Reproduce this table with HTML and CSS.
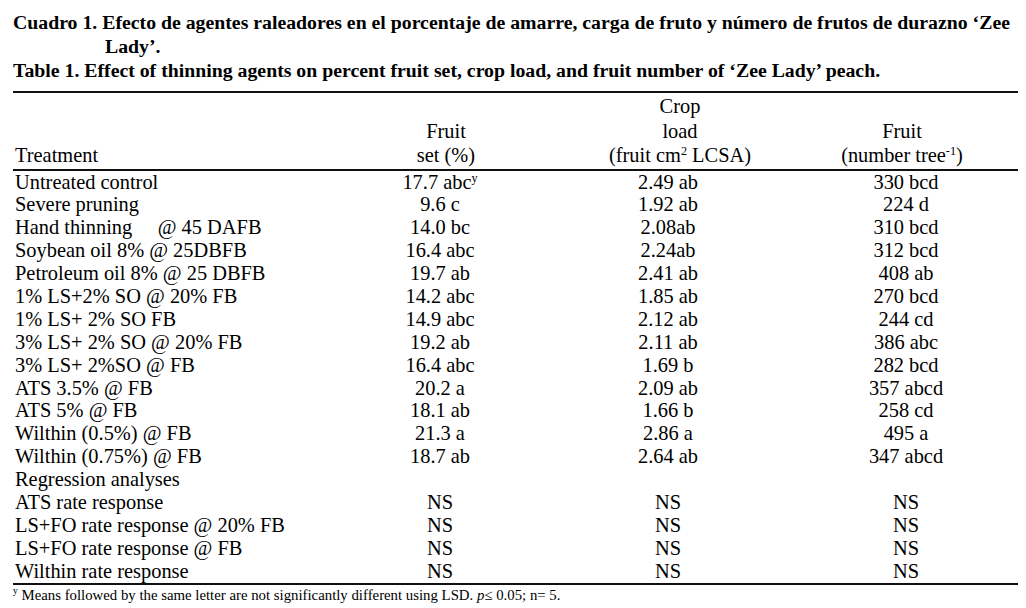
FILE: index.html
```html
<!DOCTYPE html>
<html lang="es">
<head>
<meta charset="utf-8">
<title>Cuadro 1</title>
<link rel="stylesheet" href="styles.css">
</head>
<body>
<div class="caption">
  <p class="cap-es">Cuadro 1. Efecto de agentes raleadores en el porcentaje de amarre, carga de fruto y número de frutos de durazno ‘Zee<br>Lady’.</p>
  <p class="cap-en">Table 1. Effect of thinning agents on percent fruit set, crop load, and fruit number of ‘Zee Lady’ peach.</p>
</div>
<div class="table">
  <div class="head">
    <div class="h h0">Treatment</div>
    <div class="h h1">Fruit<br>set (%)</div>
    <div class="h h2">Crop<br>load<br>(fruit cm<sup>2</sup> LCSA)</div>
    <div class="h h3">Fruit<br>(number tree<sup>-1</sup>)</div>
  </div>
  <div class="body">
    <div class="row"><span class="t">Untreated control</span><span class="c1">17.7 abc<sup>y</sup></span><span class="c2">2.49 ab</span><span class="c3">330 bcd</span></div>
    <div class="row"><span class="t">Severe pruning</span><span class="c1">9.6 c</span><span class="c2">1.92 ab</span><span class="c3">224 d</span></div>
    <div class="row"><span class="t">Hand thinning     @ 45 DAFB</span><span class="c1">14.0 bc</span><span class="c2">2.08ab</span><span class="c3">310 bcd</span></div>
    <div class="row"><span class="t">Soybean oil 8% @ 25DBFB</span><span class="c1">16.4 abc</span><span class="c2">2.24ab</span><span class="c3">312 bcd</span></div>
    <div class="row"><span class="t">Petroleum oil 8% @ 25 DBFB</span><span class="c1">19.7 ab</span><span class="c2">2.41 ab</span><span class="c3">408 ab</span></div>
    <div class="row"><span class="t">1% LS+2% SO @ 20% FB</span><span class="c1">14.2 abc</span><span class="c2">1.85 ab</span><span class="c3">270 bcd</span></div>
    <div class="row"><span class="t">1% LS+ 2% SO FB</span><span class="c1">14.9 abc</span><span class="c2">2.12 ab</span><span class="c3">244 cd</span></div>
    <div class="row"><span class="t">3% LS+ 2% SO @ 20% FB</span><span class="c1">19.2 ab</span><span class="c2">2.11 ab</span><span class="c3">386 abc</span></div>
    <div class="row"><span class="t">3% LS+ 2%SO @ FB</span><span class="c1">16.4 abc</span><span class="c2">1.69 b</span><span class="c3">282 bcd</span></div>
    <div class="row"><span class="t">ATS 3.5% @ FB</span><span class="c1">20.2 a</span><span class="c2">2.09 ab</span><span class="c3">357 abcd</span></div>
    <div class="row"><span class="t">ATS 5% @ FB</span><span class="c1">18.1 ab</span><span class="c2">1.66 b</span><span class="c3">258 cd</span></div>
    <div class="row"><span class="t">Wilthin (0.5%) @ FB</span><span class="c1">21.3 a</span><span class="c2">2.86 a</span><span class="c3">495 a</span></div>
    <div class="row"><span class="t">Wilthin (0.75%) @ FB</span><span class="c1">18.7 ab</span><span class="c2">2.64 ab</span><span class="c3">347 abcd</span></div>
    <div class="row"><span class="t">Regression analyses</span><span class="c1"></span><span class="c2"></span><span class="c3"></span></div>
    <div class="row"><span class="t">ATS rate response</span><span class="c1">NS</span><span class="c2">NS</span><span class="c3">NS</span></div>
    <div class="row"><span class="t">LS+FO rate response @ 20% FB</span><span class="c1">NS</span><span class="c2">NS</span><span class="c3">NS</span></div>
    <div class="row"><span class="t">LS+FO rate response @ FB</span><span class="c1">NS</span><span class="c2">NS</span><span class="c3">NS</span></div>
    <div class="row"><span class="t">Wilthin rate response</span><span class="c1">NS</span><span class="c2">NS</span><span class="c3">NS</span></div>
  </div>
</div>
<p class="note"><sup>y</sup> Means followed by the same letter are not significantly different using LSD. <i>p</i>≤ 0.05; n= 5.</p>
</body>
</html>
```
FILE: styles.css
```css
html, body {
  margin: 0;
  background: #fff;
}
body {
  padding: 10px 8px 0 13px;
  font-family: "Liberation Serif", "Times New Roman", serif;
  color: #000;
}
p { margin: 0; }
.caption {
  font-weight: bold;
  font-size: 19.8px;
  line-height: 24px;
  white-space: nowrap;
}
.cap-es {
  padding-left: 92px;
  text-indent: -92px;
}
.table {
  width: 1005px;
  margin-top: 9px;
  border-top: 2px solid #111;
  border-bottom: 2px solid #111;
  font-size: 20.4px;
}
.head {
  display: grid;
  grid-template-columns: 317px 220px 236px 232px;
  align-items: end;
  line-height: 24.5px;
  padding: 1px 0 1px;
  border-bottom: 2px solid #111;
}
.h0 { padding-left: 2px; }
.h1 { text-align: center; padding-left: 12px; }
.h2 { text-align: center; padding-left: 24px; }
.h3 { text-align: center; }
.row {
  display: grid;
  grid-template-columns: 317px 220px 236px 232px;
  line-height: 22.9px;
  height: 22.9px;
}
.t {
  padding-left: 2px;
  white-space: pre;
}
.c1, .c2, .c3 {
  text-align: center;
  white-space: nowrap;
}
.c3 { padding-left: 8px; }
sup {
  font-size: 0.6em;
  line-height: 0;
  vertical-align: 0.6em;
}
.note {
  font-size: 14.8px;
  line-height: 16px;
  margin-top: 2px;
}
.note sup {
  font-size: 0.65em;
}
```
